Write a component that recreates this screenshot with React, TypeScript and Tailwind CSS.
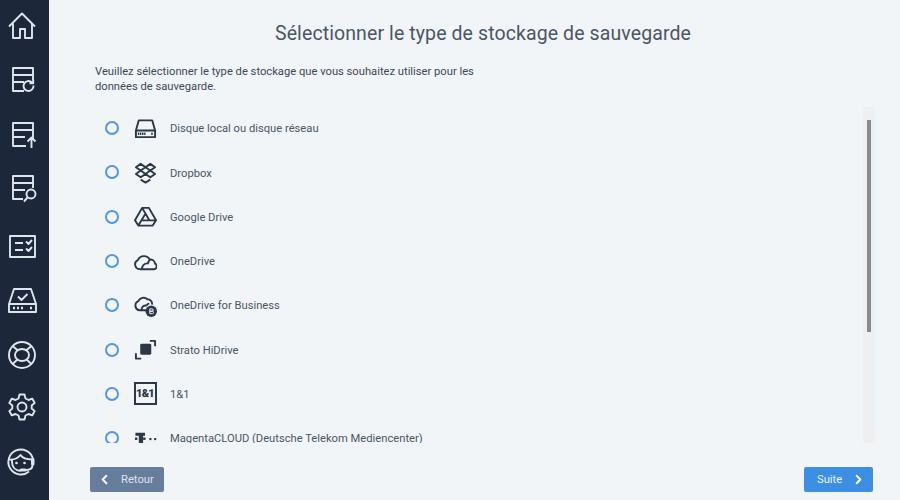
import React from "react";
import { ChevronLeft, ChevronRight } from "lucide-react";

const NavIcon = ({ children, className = "" }: { children: React.ReactNode; className?: string }) => (
  <svg className={className} width="32" height="32" viewBox="0 0 32 32" fill="none" stroke="#dfe5ee" strokeWidth="1.9" strokeLinejoin="round">
    {children}
  </svg>
);

const navIcons = [
  <NavIcon key="home" className="ml-[2px]">
    <path d="M2 16.500 15 3.500l13 13M6 13.500V28h7v-9h5v9h7V13.500" />
  </NavIcon>,
  <NavIcon key="backup" className="ml-[2px]">
    <path d="M17 27H6V4h20v12M6 11h20M6 18h11M6 24" />
    <path d="M26.500 21.500a5 5 0 1 1-1.600-3.200M26.200 15.500v3.800h-3.800" />
  </NavIcon>,
  <NavIcon key="restore" className="ml-[2px]">
    <path d="M19 27H6V4h20v16M6 11h20M6 18h12" />
    <path d="M24.500 29V19M20.500 22.500l4-4 4 4" />
  </NavIcon>,
  <NavIcon key="search" className="ml-[2px]">
    <path d="M16 26H6V3h20v12M6 10h20M6 17h12" />
    <circle cx="24" cy="21" r="4.500" />
    <path d="M20.500 24.500 17 28.500" />
  </NavIcon>,
  <NavIcon key="tasks" className="mt-[3px]">
    <path d="M4 6h25v21H4zM9 13h8M9 20h8M20 11.500l2.500 2.500 3.500-4M20 18.500l2.500 2.500 3.500-4" />
  </NavIcon>,
  <NavIcon key="drive">
    <path d="M3 20 8 5h17l5 15v8H3zM3 20h27M12 12.500l3.500 3.500 6-6" />
    <path d="M7 24h2M11 24h2M15 24h2M24 24h2" strokeWidth="2.400" />
  </NavIcon>,
  <NavIcon key="help">
    <circle cx="16" cy="16" r="13" />
    <ellipse cx="16" cy="16" rx="7" ry="6" />
    <path d="M6.500 7 12 11.500M25.500 7 20 11.500M6.500 25 11.500 20.500M25.500 25 20.500 20.500" />
  </NavIcon>,
  <NavIcon key="settings" className="-mt-[2px]">
    <path d="m13.500 3.500h5l1 4 3 1.500 3.700-1.400 2.500 4.300-3 2.600v3l3 2.600-2.500 4.300-3.700-1.400-3 1.500-1 4h-5l-1-4-3-1.500-3.700 1.400-2.500-4.300 3-2.600v-3l-3-2.600 2.500-4.300 3.700 1.400 3-1.500z" />
    <circle cx="16" cy="16" r="4.500" />
  </NavIcon>,
  <NavIcon key="support">
    <path d="M23 26.500A12.500 12.500 0 1 1 27 14" />
    <path d="M3 14.500c5 .5 9-1.500 11.500-4.500 2 3 6 4.500 11.500 4.500" />
    <path d="M6 15v2c0 5 3.500 8.500 8.500 9" />
    <rect x="25" y="13" width="3.500" height="7.500" rx="1.500" fill="#dfe5ee" stroke="none" />
    <path d="M26.500 20c0 3.500-3 5-6.500 5" />
    <rect x="13.500" y="23.500" width="7" height="3" rx="1.500" fill="#dfe5ee" stroke="none" />
    <circle cx="10.500" cy="18" r="1.300" fill="#dfe5ee" stroke="none" />
    <circle cx="18.500" cy="18" r="1.300" fill="#dfe5ee" stroke="none" />
  </NavIcon>,
];

const Sketch = ({ children }: { children: React.ReactNode }) => (
  <svg width="23" height="23" viewBox="0 0 24 24" fill="none" stroke="#2d3746" strokeWidth="2" strokeLinejoin="round">
    {children}
  </svg>
);

const storages = [
  {
    name: "Disque local ou disque réseau",
    icon: (
      <Sketch>
        <path d="M2 14 5 3.500h14L22 14v7H2zM2 14h20" />
        <path d="M4 17.500h8M18 17.500h2" strokeWidth="2.400" strokeDasharray="1.500 .7" />
      </Sketch>
    ),
  },
  {
    name: "Dropbox",
    icon: (
      <Sketch>
        <path d="M7 3 12 6.500 17 3l5 3.500-5 3.500 5 3.500-5 3.500-5-3.500L7 17l-5-3.500L7 10 2 6.500zM7 10l5-3.500L17 10l-5 3.500zM7 19.500l5 3 5-3" />
      </Sketch>
    ),
  },
  {
    name: "Google Drive",
    icon: (
      <Sketch>
        <path d="M8.500 3h7L23 16l-3.500 5.500h-15L1 16zM8.500 3l3.500 6-7.500 12.500M12 9l4 7H23M8.500 16H16" />
      </Sketch>
    ),
  },
  {
    name: "OneDrive",
    icon: (
      <Sketch>
        <path d="M6 20h14.500a3 3 0 0 0 1.500-5.700 5 5 0 0 0-5.500-4.300 7 7 0 0 0-12.500.5A5 5 0 0 0 6 20Z" />
        <path d="M8.500 20c-.5-3.500 2.500-6.500 6-6 .3-1.300 1.200-3 2-4" />
      </Sketch>
    ),
  },
  {
    name: "OneDrive for Business",
    icon: (
      <Sketch>
        <path d="M13 17H5.500a5 5 0 0 1-1-9.500A6 6 0 0 1 14 5.500a5 5 0 0 1 5 5.500" />
        <path d="M8 17c-.5-3 2-5.500 5-5 1-1.500 2-2 3-2" />
        <circle cx="18" cy="18" r="6" fill="#2d3746" stroke="none" />
        <path d="M16.500 15.500h2.300a1.200 1.200 0 0 1 0 2.500h-2.300 2.600a1.200 1.200 0 0 1 0 2.500h-2.600z" stroke="#f1f5f8" strokeWidth="1" />
      </Sketch>
    ),
  },
  {
    name: "Strato HiDrive",
    icon: (
      <Sketch>
        <rect x="6.500" y="6" width="11.500" height="11.500" rx="1.500" fill="#2d3746" stroke="none" />
        <path d="M16.500 3H22v5.500M2 16v5.500h5.500" />
      </Sketch>
    ),
  },
  {
    name: "1&1",
    icon: (
      <div className="flex h-[23px] w-[23px] items-center justify-center border-2 border-[#2d3746] text-[11px] leading-none font-black tracking-[-0.8px] text-[#2d3746]">
        1&amp;1
      </div>
    ),
  },
  {
    name: "MagentaCLOUD (Deutsche Telekom Mediencenter)",
    icon: (
      <svg width="23" height="23" viewBox="0 0 24 24" fill="#2d3746">
        <path d="M1 6.500h10v3H9v8.500H4.500V9.500h-3.500z" transform="translate(0.500 -0.500)" />
        <rect x="1" y="11" width="2.500" height="2.500" />
        <rect x="9.500" y="11" width="2.500" height="2.500" />
        <rect x="16" y="11.500" width="2.200" height="2.200" />
        <rect x="21" y="11.500" width="2.200" height="2.200" />
      </svg>
    ),
  },
];

export default function App() {
  return (
    <div className="flex h-[500px] w-[900px] overflow-hidden bg-[#f1f5f8] font-['Roboto',sans-serif] text-[#4c5564]">
      <nav className="flex w-[49px] shrink-0 flex-col items-center gap-[22.300px] bg-[#1c273a] pt-[10px] pr-[5px]">
        {navIcons}
      </nav>
      <main className="flex min-w-0 flex-1 flex-col">
        <h1 className="mt-[20px] pl-[17px] text-center text-[19.500px] leading-[27px] font-normal tracking-[0.1px]">
          Sélectionner le type de stockage de sauvegarde
        </h1>
        <p className="mt-[17px] ml-[46px] w-[400px] text-[11.200px] leading-[15px] text-[#3e4756]">
          Veuillez sélectionner le type de stockage que vous souhaitez utiliser pour les données de sauvegarde.
        </p>
        <div className="mt-[13px] ml-[46px] flex h-[336px] w-[780px] overflow-hidden">
          <ul className="-mt-[1px] min-w-0 flex-1">
            {storages.map((s) => (
              <li key={s.name} className="flex h-[44.300px] items-center">
                <span className="ml-[10px] h-[14px] w-[14px] shrink-0 rounded-full border-2 border-[#5298de]" />
                <span className="ml-[14px] flex w-[24px] shrink-0 justify-center">{s.icon}</span>
                <span className="mt-[3px] ml-[13px] text-[11.200px] text-[#4c5564]">{s.name}</span>
              </li>
            ))}
          </ul>
          <div className="flex w-[12px] shrink-0 justify-center bg-[#efefef] pt-[13px]">
            <div className="h-[212px] w-[4px] bg-[#8a8a8a]" />
          </div>
        </div>
        <footer className="mt-[24px] ml-[41px] flex w-[783px] items-center justify-between">
          <button className="flex h-[25px] w-[74px] items-center rounded-[2px] bg-[#677d9c] pl-[7px] text-[11.200px] text-[#dce4ee]">
            <ChevronLeft size={15} strokeWidth={3} color="#ffffff" />
            <span className="mt-[1px] ml-[9px]">Retour</span>
          </button>
          <button className="flex h-[25px] w-[69px] items-center rounded-[2px] bg-[#3d8fe3] pl-[13px] text-[11.200px] text-[#eef5fd]">
            <span className="mt-[1px]">Suite</span>
            <ChevronRight size={15} strokeWidth={3} color="#ffffff" className="ml-[9px]" />
          </button>
        </footer>
      </main>
    </div>
  );
}
